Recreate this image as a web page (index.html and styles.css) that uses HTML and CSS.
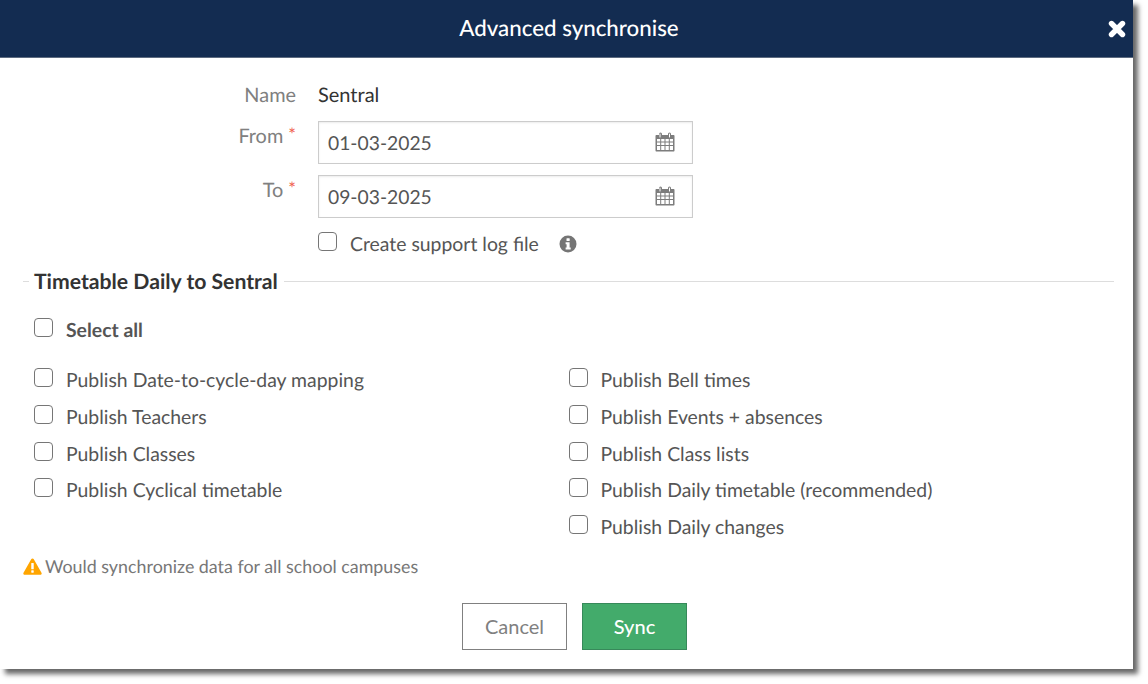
FILE: index.html
```html
<!DOCTYPE html>
<html lang="en">
<head>
<meta charset="utf-8">
<title>Advanced synchronise</title>
<link rel="stylesheet" href="styles.css">
</head>
<body>
<div class="dialog">
  <header class="dialog-header">
    <h1 class="dialog-title">Advanced synchronise</h1>
    <button class="close" aria-label="Close">
      <svg viewBox="0 0 18 18" width="18" height="18"><path d="M3.500 3.500 14.500 14.500M14.500 3.500 3.500 14.500" stroke="#fff" stroke-width="5.400" stroke-linecap="round" fill="none"/></svg>
    </button>
  </header>
  <div class="dialog-body">
    <div class="form-grid">
      <div class="label label-name">Name</div>
      <div class="value">Sentral</div>
      <div class="label">From <span class="req">*</span></div>
      <div class="date-input"><span>01-03-2025</span>
        <svg class="cal" viewBox="0 0 20 20" width="20" height="20"><use href="#cal-icon"/></svg>
      </div>
      <div class="label">To <span class="req">*</span></div>
      <div class="date-input"><span>09-03-2025</span>
        <svg class="cal" viewBox="0 0 20 20" width="20" height="20"><use href="#cal-icon"/></svg>
      </div>
      <div></div>
      <div class="support-row">
        <span class="check"></span>
        <span class="support-text">Create support log file</span>
        <svg class="info" viewBox="0 0 18 18" width="18" height="18"><circle cx="9" cy="9" r="8.500" fill="#757575"/><rect x="7.500" y="3.200" width="3.200" height="2.800" rx=".5" fill="#fff"/><path d="M6.600 7.300h4v5.200h1.100v2H6.600v-2h1v-3.200h-1z" fill="#fff"/></svg>
      </div>
    </div>

    <div class="section-head">
      <h2 class="section-title">Timetable Daily to Sentral</h2>
    </div>

    <div class="check-row select-all"><span class="check"></span><span>Select all</span></div>

    <div class="columns">
      <div class="column">
        <div class="check-row"><span class="check"></span><span>Publish Date-to-cycle-day mapping</span></div>
        <div class="check-row"><span class="check"></span><span>Publish Teachers</span></div>
        <div class="check-row"><span class="check"></span><span>Publish Classes</span></div>
        <div class="check-row"><span class="check"></span><span>Publish Cyclical timetable</span></div>
      </div>
      <div class="column">
        <div class="check-row"><span class="check"></span><span>Publish Bell times</span></div>
        <div class="check-row"><span class="check"></span><span>Publish Events + absences</span></div>
        <div class="check-row"><span class="check"></span><span>Publish Class lists</span></div>
        <div class="check-row"><span class="check"></span><span>Publish Daily timetable (recommended)</span></div>
        <div class="check-row"><span class="check"></span><span>Publish Daily changes</span></div>
      </div>
    </div>

    <div class="warning">
      <svg viewBox="0 0 20 18" width="19" height="17"><path d="M10 .6c.6 0 1.100.3 1.400.8l8.100 14.200c.6 1-.1 2.100-1.300 2.100H1.800c-1.200 0-1.900-1.100-1.300-2.100L8.600 1.400c.3-.5.8-.8 1.400-.8z" fill="#ffa500"/><rect x="8.700" y="5.300" width="2.600" height="6.600" rx=".6" fill="#fff"/><rect x="8.700" y="13" width="2.600" height="2.500" rx=".5" fill="#fff"/></svg>
      <span>Would synchronize data for all school campuses</span>
    </div>

    <div class="actions">
      <button class="btn btn-cancel">Cancel</button>
      <button class="btn btn-sync">Sync</button>
    </div>
  </div>
</div>
<svg class="defs" width="0" height="0" aria-hidden="true">
  <symbol id="cal-icon" viewBox="0 0 20 20">
    <path fill-rule="evenodd" fill="#7d7d7d" d="M1.500 3H4V2a1.500 1.500 0 0 1 3 0v1h6V2a1.500 1.500 0 0 1 3 0v1h2.500c.6 0 1 .4 1 1v14.500c0 .6-.4 1-1 1h-17c-.6 0-1-.4-1-1V4c0-.6.4-1 1-1zM5 1.500a.5.500 0 0 0-.5.500v3a.5.500 0 0 0 1 0V2a.5.500 0 0 0-.5-.5zm9.500 0a.5.500 0 0 0-.5.500v3a.5.500 0 0 0 1 0V2a.5.500 0 0 0-.5-.5zM2 7v2.500h3.200V7zm4.200 0v2.500h3.300V7zm4.300 0v2.500h3.300V7zm4.300 0v2.500H18V7zM2 10.500V13h3.200v-2.500zm4.200 0V13h3.300v-2.500zm4.300 0V13h3.300v-2.500zm4.300 0V13H18v-2.500zM2 14v4h3.200v-4zm4.200 0v4h3.300v-4zm4.300 0v4h3.300v-4zm4.300 0v4H18v-4z"/>
  </symbol>
</svg>
</body>
</html>
```
FILE: styles.css
```css
* { box-sizing: border-box; }
html, body { margin: 0; padding: 0; background: #fff; }
body {
  width: 1148px;
  height: 684px;
  overflow: hidden;
  font-family: Lato, "Open Sans", sans-serif;
  font-size: 19.4px;
  color: #555;
  text-rendering: geometricPrecision;
}
.defs { display: block; position: absolute; }
.dialog {
  width: 1133px;
  height: 669px;
  background: #fff;
  box-shadow: 5px 5px 5px rgba(0, 0, 0, 0.6);
  display: flex;
  flex-direction: column;
}
.dialog-header {
  height: 58px;
  flex: none;
  background: #132c51;
  border-bottom: 1px solid #5d6b80;
  display: flex;
  align-items: center;
  justify-content: center;
  padding: 0 0 1px 5px;
  position: relative;
}
.dialog-title {
  margin: 0;
  font-size: 22.300px;
  font-weight: 500;
  color: #fff;
  line-height: 1;
}
.close {
  position: absolute;
  right: 7px;
  top: 20px;
  width: 18px;
  height: 18px;
  padding: 0;
  border: 0;
  background: none;
}
.close svg { display: block; }
.dialog-body {
  flex: 1;
  padding: 0 19px 0 23px;
  display: flex;
  flex-direction: column;
}
.form-grid {
  display: grid;
  grid-template-columns: 273px 375px;
  column-gap: 22px;
  margin-top: 24px;
}
.label {
  text-align: right;
  color: #808080;
  font-size: 19.900px;
  line-height: 24px;
  margin-top: 1px;
  white-space: nowrap;
}
.label-name { margin-top: 1px; }
.req {
  color: #f0604d;
  font-size: 18px;
  vertical-align: 2px;
}
.value {
  color: #333;
  font-size: 20px;
  line-height: 24px;
  margin-top: 1px;
  height: 38px;
}
.date-input {
  height: 43px;
  margin-bottom: 11px;
  border: 1px solid #ccc;
  box-shadow: inset 0 1px 2px rgba(0, 0, 0, 0.08);
  padding: 0 17px 0 9px;
  display: flex;
  align-items: center;
  justify-content: space-between;
  font-size: 19.300px;
  color: #555;
}
.date-input span { margin-top: 2px; }
.cal { display: block; margin-bottom: 2px; }
.support-row {
  display: flex;
  align-items: center;
  height: 30px;
  color: #555;
}
.support-text { margin-left: 13px; margin-right: 20px; }
.check {
  width: 19px;
  height: 19px;
  flex: none;
  border: 1.500px solid #767676;
  border-radius: 4px;
  background: #fff;
  margin-top: -6px;
}
.section-head {
  position: relative;
  height: 26px;
  margin-top: 9px;
  display: flex;
  align-items: center;
}
.section-head::before {
  content: "";
  position: absolute;
  left: 0;
  right: 0;
  top: 13px;
  border-top: 1px solid #ddd;
}
.section-title {
  position: relative;
  margin: 0 0 0 6px;
  padding: 0 6px 0 5px;
  background: #fff;
  font-size: 21.200px;
  font-weight: 700;
  color: #333;
  white-space: nowrap;
}
.check-row {
  display: flex;
  align-items: center;
  gap: 13px;
  height: 36.800px;
  padding-left: 11px;
  white-space: nowrap;
}
.select-all { margin-top: 18px; font-weight: 700; }
.columns {
  display: grid;
  grid-template-columns: 534.500px 1fr;
  margin-top: 13.400px;
}
.warning {
  display: flex;
  align-items: center;
  gap: 3px;
  margin-top: 9px;
  font-size: 17.850px;
  color: #777;
}
.warning svg { flex: none; }
.actions {
  display: flex;
  justify-content: center;
  gap: 15px;
  margin-top: 25.400px;
  padding-left: 12px;
}
.btn {
  width: 105px;
  height: 47px;
  font-family: inherit;
  font-size: 20px;
  padding: 0;
}
.btn-cancel { background: #fff; border: 1px solid #808080; color: #808080; }
.btn-sync { background: #43ab6b; border: 1px solid #37895a; color: #fff; font-weight: 500; }
```
